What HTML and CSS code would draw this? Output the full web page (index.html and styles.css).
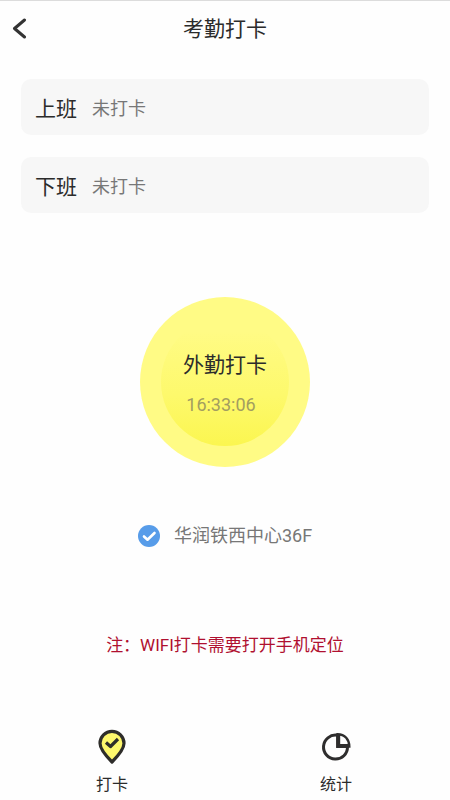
FILE: index.html
```html
<!DOCTYPE html>
<html lang="zh-CN">
<head>
<meta charset="utf-8">
<meta name="viewport" content="width=device-width, initial-scale=1">
<title>考勤打卡</title>
<link rel="stylesheet" href="styles.css">
</head>
<body>
<header class="header">
  <button class="back" type="button" aria-label="返回">
    <svg width="16" height="22" viewBox="0 0 16 22" fill="none" stroke="#333" stroke-width="3" stroke-linecap="round" stroke-linejoin="round"><path d="M12.500 2 2.500 10.500l10 8.500"/></svg>
  </button>
  <h1 class="title">考勤打卡</h1>
</header>
<main class="main">
  <section class="records">
    <div class="record"><span class="record-name">上班</span><span class="record-state">未打卡</span></div>
    <div class="record"><span class="record-name">下班</span><span class="record-state">未打卡</span></div>
  </section>
  <button class="punch" type="button">
    <span class="punch-inner">
      <span class="punch-label">外勤打卡</span>
      <span class="punch-time">16:33:06</span>
    </span>
  </button>
  <p class="place">
    <svg width="22" height="22" viewBox="0 0 22 22" fill="none"><circle cx="11" cy="11" r="11" fill="#579ce9"/><path d="m6 11.500 3.500 3.200 7-6.700" stroke="#fff" stroke-width="2.600" stroke-linecap="round" stroke-linejoin="round"/></svg>
    <span>华润铁西中心36F</span>
  </p>
  <p class="note">注：WIFI打卡需要打开手机定位</p>
</main>
<nav class="tabs">
  <a class="tab" href="#punch">
    <svg width="32" height="36" viewBox="0 0 32 36" fill="none" stroke="#2e2d2a" stroke-linejoin="round"><path d="M16 33C11 28 4 20.500 4 14.300a12 12 0 0 1 24 0C28 20.500 21 28 16 33Z" fill="#fdf76c" stroke-width="3.200"/><path d="m10 13.500 4.500 4 7.500-7.500" stroke-width="3.200"/></svg>
    <span>打卡</span>
  </a>
  <a class="tab" href="#stats">
    <svg width="32" height="36" viewBox="0 0 32 36" fill="none" stroke="#2e2d2d"><path d="M17 6.200A12 12 0 1 0 27.500 18" stroke-width="3"/><path d="M17.500 5.200V17.500H29.300C29.300 10.500 25 5.200 17.500 5.200Z" stroke-width="2.400"/><path d="M18.200 5v12H29" stroke-width="4"/></svg>
    <span>统计</span>
  </a>
</nav>
</body>
</html>
```
FILE: styles.css
```css
* {
  box-sizing: border-box;
}

body {
  margin: 0;
  min-height: 100vh;
  display: flex;
  flex-direction: column;
  background: #fefefe;
  border-top: 1px solid #dcdcdc;
  color: #2b2b2b;
  font-family: Roboto, "Noto Sans CJK SC", sans-serif;
}

button {
  border: 0;
  padding: 0;
  font: inherit;
  color: inherit;
  cursor: pointer;
}

.header {
  display: grid;
  grid-template-columns: 48px 1fr 48px;
  align-items: center;
  height: 56px;
}

.back {
  display: flex;
  align-items: center;
  height: 48px;
  padding-left: 12px;
  background: none;
}

.title {
  margin: 0;
  font-size: 21px;
  font-weight: 400;
  line-height: 32px;
  text-align: center;
}

.main {
  flex: 1;
  display: flex;
  flex-direction: column;
  align-items: center;
  padding: 22px 21px 0;
}

.records {
  align-self: stretch;
  display: flex;
  flex-direction: column;
  gap: 22px;
}

.record {
  display: flex;
  align-items: center;
  gap: 15px;
  height: 56px;
  padding: 0 14px;
  border-radius: 10px;
  background: #f7f7f7;
}

.record-name {
  font-size: 21px;
}

.record-state {
  font-size: 18px;
  color: #777;
}

.punch {
  margin-top: 84px;
  padding: 21px;
  border-radius: 50%;
  background: #fffb85;
}

.punch-inner {
  display: flex;
  flex-direction: column;
  align-items: center;
  justify-content: center;
  gap: 12px;
  width: 128px;
  height: 128px;
  padding-top: 2px;
  border-radius: 50%;
  background: linear-gradient(#fffb85 10%, #fdf96c 60%, #fbf650);
}

.punch-label {
  font-size: 21px;
  line-height: 32px;
}

.punch-time {
  padding-right: 8px;
  font-size: 18px;
  line-height: 24px;
  color: #a39e60;
}

.place {
  display: flex;
  align-items: center;
  gap: 14px;
  margin: 55px 0 0;
  font-size: 18px;
  line-height: 28px;
  color: #777;
}

.note {
  margin: 81px 0 0;
  font-size: 17px;
  line-height: 28px;
  color: #b01030;
}

.tabs {
  display: grid;
  grid-template-columns: 1fr 1fr;
  padding: 0 2px 3px 0;
}

.tab {
  display: flex;
  flex-direction: column;
  align-items: center;
  gap: 8px;
  font-size: 16px;
  line-height: 24px;
  color: inherit;
  text-decoration: none;
}
```
